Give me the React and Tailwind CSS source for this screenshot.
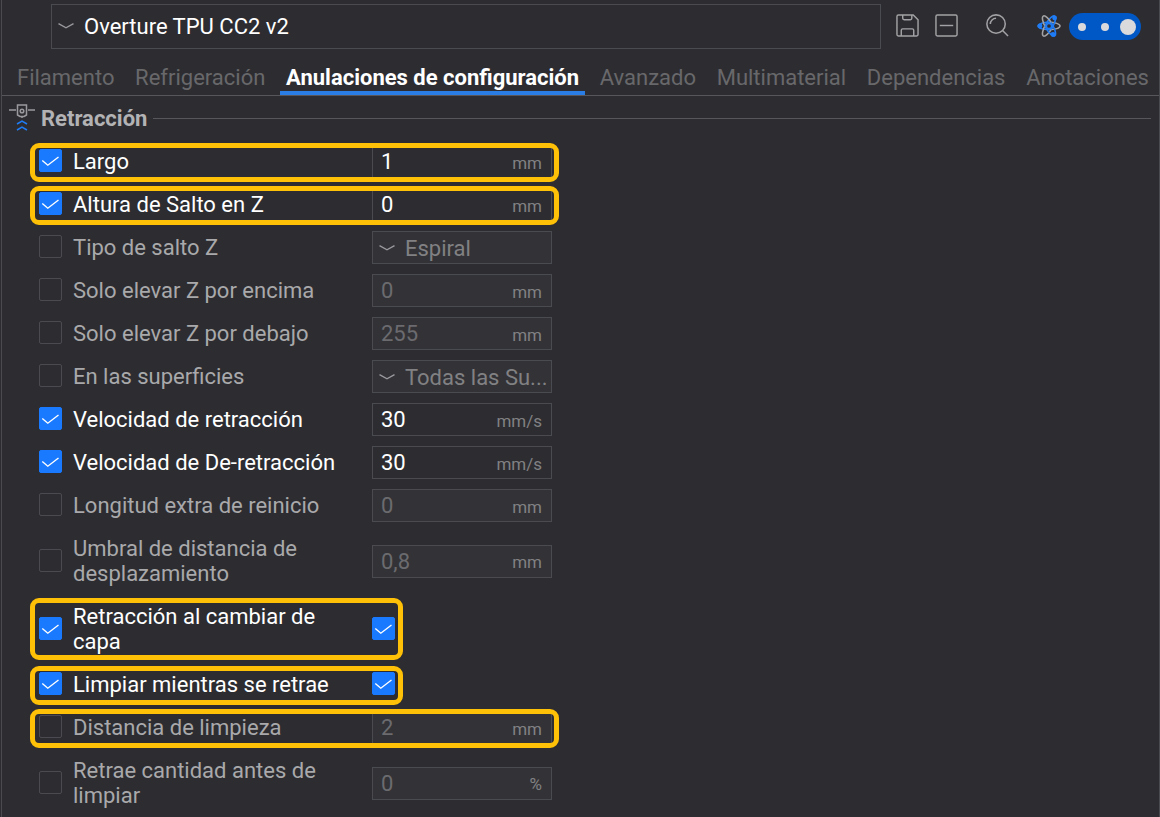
import React, { useState } from "react";
import clsx from "clsx";

const TABS = [
    "Filamento",
    "Refrigeración",
    "Anulaciones de configuración",
    "Avanzado",
    "Multimaterial",
    "Dependencias",
    "Anotaciones"
];

const SETTINGS = [
    { id: "largo", label: "Largo", on: true, value: "1", unit: "mm", marked: true },
    { id: "altura", label: "Altura de Salto en Z", on: true, value: "0", unit: "mm", marked: true },
    { id: "tipo", label: "Tipo de salto Z", options: ["Espiral"] },
    { id: "encima", label: "Solo elevar Z por encima", value: "0", unit: "mm" },
    { id: "debajo", label: "Solo elevar Z por debajo", value: "255", unit: "mm" },
    { id: "superficies", label: "En las superficies", options: ["Todas las Su..."] },
    { id: "retraccion", label: "Velocidad de retracción", on: true, value: "30", unit: "mm/s" },
    { id: "deretraccion", label: "Velocidad de De-retracción", on: true, value: "30", unit: "mm/s" },
    { id: "extra", label: "Longitud extra de reinicio", value: "0", unit: "mm" },
    { id: "umbral", label: "Umbral de distancia de desplazamiento", value: "0,8", unit: "mm", tall: true },
    { id: "capa", label: "Retracción al cambiar de capa", on: true, toggle: true, marked: true, tall: true },
    { id: "limpiar", label: "Limpiar mientras se retrae", on: true, toggle: true, marked: true },
    { id: "distancia", label: "Distancia de limpieza", value: "2", unit: "mm", marked: true },
    { id: "cantidad", label: "Retrae cantidad antes de limpiar", value: "0", unit: "%", tall: true }
];

function Chevron({ className }) {
    return (
        <svg viewBox="0 0 16 6" className={clsx("w-4 h-1.5 pointer-events-none", className)} fill="none" stroke="#9a9a9e" strokeWidth="1.4">
            <path d="M0.5 0.7 L8 4.8 L15.5 0.7" />
        </svg>
    );
}

function CheckBox({ id, label, checked, onChange }) {
    return (
        <span className="grid shrink-0 mb-0.5">
            <input
                id={id}
                type="checkbox"
                aria-label={label}
                checked={checked}
                onChange={onChange}
                className="col-start-1 row-start-1 appearance-none w-[23px] h-[23px] rounded-xs border border-[#4a4a50] checked:bg-[#1a7aff] checked:border-[#1a7aff]"
            />
            {checked && (
                <svg viewBox="0 0 23 23" className="col-start-1 row-start-1 w-[23px] h-[23px] pointer-events-none" fill="none" stroke="#fff" strokeWidth="1.4">
                    <path d="M3.3 11.5 L8.8 16.2 L19.5 8" />
                </svg>
            )}
        </span>
    );
}

function ValueField({ item, enabled }) {
    return (
        <div
            className={clsx(
                "flex items-center w-[180px] h-[33px] border border-[#4a4a51] pl-2 pr-[9px]",
                !enabled && "bg-[#333337]"
            )}
        >
            <input
                type="text"
                aria-label={item.label}
                defaultValue={item.value}
                disabled={!enabled}
                className="flex-1 min-w-0 bg-transparent outline-none text-white disabled:text-[#6b6b6f]"
            />
            <span className="text-[17px] pt-1 text-[#818183]">{item.unit}</span>
        </div>
    );
}

function SelectField({ item, enabled }) {
    return (
        <div className={clsx("relative w-[180px] h-[33px] border border-[#4a4a51]", !enabled && "bg-[#333337]")}>
            <select
                aria-label={item.label}
                disabled={!enabled}
                className="appearance-none w-full h-full pl-8 pb-0.5 bg-transparent outline-none text-white disabled:text-[#818183] disabled:opacity-100"
            >
                {item.options.map((o) => (
                    <option key={o}>{o}</option>
                ))}
            </select>
            <Chevron className="absolute left-1.5 top-[13px]" />
        </div>
    );
}

function SettingRow({ item }) {
    const [enabled, setEnabled] = useState(!!item.on);
    const [flag, setFlag] = useState(true);

    return (
        <div className={clsx("relative flex items-center w-fit", item.tall ? "h-[58px]" : "h-[33px]")}>
            <CheckBox id={item.id} checked={enabled} onChange={() => setEnabled(!enabled)} />
            <label
                htmlFor={item.id}
                className={clsx("w-[310px] pl-[11px] pr-3 leading-[25px]", enabled ? "text-white" : "text-[#a9a9ab]")}
            >
                {item.label}
            </label>
            {item.toggle && <CheckBox label={item.label} checked={flag} onChange={() => setFlag(!flag)} />}
            {item.options && <SelectField item={item} enabled={enabled} />}
            {item.unit && <ValueField item={item} enabled={enabled} />}
            {item.marked && (
                <div
                    className={clsx(
                        "absolute -left-[9px] -top-0.5 border-[5px] border-[#ffc107] rounded-[9px] pointer-events-none",
                        item.toggle ? "-right-2" : "-right-[7px]",
                        item.tall ? "-bottom-0.5" : "-bottom-1"
                    )}
                />
            )}
        </div>
    );
}

function ModeSwitch() {
    const [mode, setMode] = useState(2);
    return (
        <div role="radiogroup" aria-label="Modo" className="grid grid-cols-3 place-items-center w-[72px] h-[27px] rounded-full bg-[#0058c6] px-0.5">
            {[0, 1, 2].map((m) => (
                <input
                    key={m}
                    type="radio"
                    name="mode"
                    aria-label={`Modo ${m + 1}`}
                    checked={mode === m}
                    onChange={() => setMode(m)}
                    className="appearance-none w-2 h-2 rounded-full bg-[#dadadc] checked:w-4 checked:h-4"
                />
            ))}
        </div>
    );
}

function AtomIcon() {
    return (
        <svg viewBox="0 0 24 24" className="w-6 h-6" fill="none" strokeWidth="1.5">
            <defs>
                <linearGradient id="orbit" x1="0" y1="0" x2="1" y2="0">
                    <stop offset="0.55" stopColor="#1f7cf5" />
                    <stop offset="0.65" stopColor="#a2a2a5" />
                </linearGradient>
            </defs>
            <ellipse cx="12" cy="12" rx="11" ry="3.7" stroke="url(#orbit)" />
            <ellipse cx="12" cy="12" rx="11.5" ry="3.7" stroke="url(#orbit)" transform="rotate(120 12 12)" />
            <ellipse cx="12" cy="12" rx="11.5" ry="3.7" stroke="url(#orbit)" transform="rotate(240 12 12)" />
            <circle cx="12" cy="12" r="2.6" fill="#2d2d31" stroke="#1f7cf5" />
            <g fill="#1f7cf5">
                <circle cx="17.6" cy="4" r="2.4" />
                <circle cx="3" cy="12" r="2.4" />
                <circle cx="16" cy="20.5" r="2.4" />
            </g>
        </svg>
    );
}

function Toolbar() {
    return (
        <div className="flex items-center h-[45px] mt-1 pl-[49px] pr-[18px]">
            <div className="relative flex-1 h-full border border-[#4a4a51]">
                <select aria-label="Perfil" className="appearance-none w-full h-full pl-8 bg-transparent outline-none text-white">
                    <option>Overture TPU CC2 v2</option>
                </select>
                <Chevron className="absolute left-1.5 top-[18px]" />
            </div>
            <button aria-label="Guardar" className="ml-[15px] mb-0.5">
                <svg viewBox="0 0 24 24" className="w-[23px] h-[23px]" fill="none" stroke="#a2a2a5" strokeWidth="1.5">
                    <path d="M2.5 1 H18 L23 6 V21.5 Q23 23 21.5 23 H2.5 Q1 23 1 21.5 V2.5 Q1 1 2.5 1 Z" />
                    <path d="M7 1 V4.5 Q7 6 8.5 6 H15 Q16.5 6 16.5 4.5 V1 M5.5 23 V17 Q5.5 15.5 7 15.5 H17 Q18.5 15.5 18.5 17 V23" />
                </svg>
            </button>
            <button aria-label="Eliminar" className="ml-4 mb-0.5">
                <svg viewBox="0 0 24 24" className="w-[23px] h-[23px]" fill="none" stroke="#a2a2a5" strokeWidth="1.5">
                    <rect x="1" y="1" width="22" height="22" rx="1.5" />
                    <path d="M5 12 H19" />
                </svg>
            </button>
            <button aria-label="Buscar" className="ml-7 mb-0.5">
                <svg viewBox="0 0 24 24" className="w-[23px] h-[23px]" fill="none" stroke="#a2a2a5" strokeWidth="1.6">
                    <circle cx="10.5" cy="10.5" r="9.6" />
                    <path d="M4.5 10.5 A6 6 0 0 1 10.5 4.5 M17.3 17.3 L23 23" />
                </svg>
            </button>
            <button aria-label="Comparar" className="ml-7 mb-0.5">
                <AtomIcon />
            </button>
            <div className="ml-2">
                <ModeSwitch />
            </div>
        </div>
    );
}

export default function App() {
    const [tab, setTab] = useState(2);

    return (
        <div className="min-h-screen bg-[#2d2d31] pl-px font-[Roboto,sans-serif] text-[22px]">
            <div className="flow-root min-h-screen border-x border-[#4a4a51]">
                <Toolbar />

                {/* Tabs */}
                <div role="tablist" className="flex justify-between h-[47px] pl-[15px] pr-[10px] border-b border-[#56565b]">
                    {TABS.map((t, i) => (
                        <button
                            key={t}
                            role="tab"
                            aria-selected={i === tab}
                            onClick={() => setTab(i)}
                            className={clsx(
                                "pt-3 whitespace-nowrap border-b-4",
                                i === tab ? "-mx-1.5 px-1.5 font-bold text-white border-[#2a7de5]" : "text-[#68686b] border-transparent"
                            )}
                        >
                            {t}
                        </button>
                    ))}
                </div>

                {/* Section header */}
                <div className="flex items-center h-11 pl-[7px] pr-2">
                    <svg viewBox="0 0 26 28" className="w-[26px] h-7 shrink-0" fill="none" strokeWidth="1.5">
                        <path d="M0 6 H7 M19 6 H26" stroke="#9a9a9e" />
                        <path d="M8.5 1 H17.5 V11 L15 12.5 H11 L8.5 11 Z M13 12 V14" stroke="#9a9a9e" />
                        <circle cx="13" cy="7" r="1.8" stroke="#9a9a9e" />
                        <path d="M8 20 L13 17 L18 20 M8 26 L13 23 L18 26" stroke="#1f7cf5" />
                    </svg>
                    <h2 className="ml-1.5 font-bold text-[#b3b3b5]">Retracción</h2>
                    <div className="flex-1 ml-1.5 h-px bg-[#56565b]" />
                </div>

                {/* Settings */}
                <div className="flex flex-col gap-2.5 pt-[5px] pl-[37px]">
                    {SETTINGS.map((item) => (
                        <SettingRow key={item.id} item={item} />
                    ))}
                </div>
            </div>
        </div>
    );
}
